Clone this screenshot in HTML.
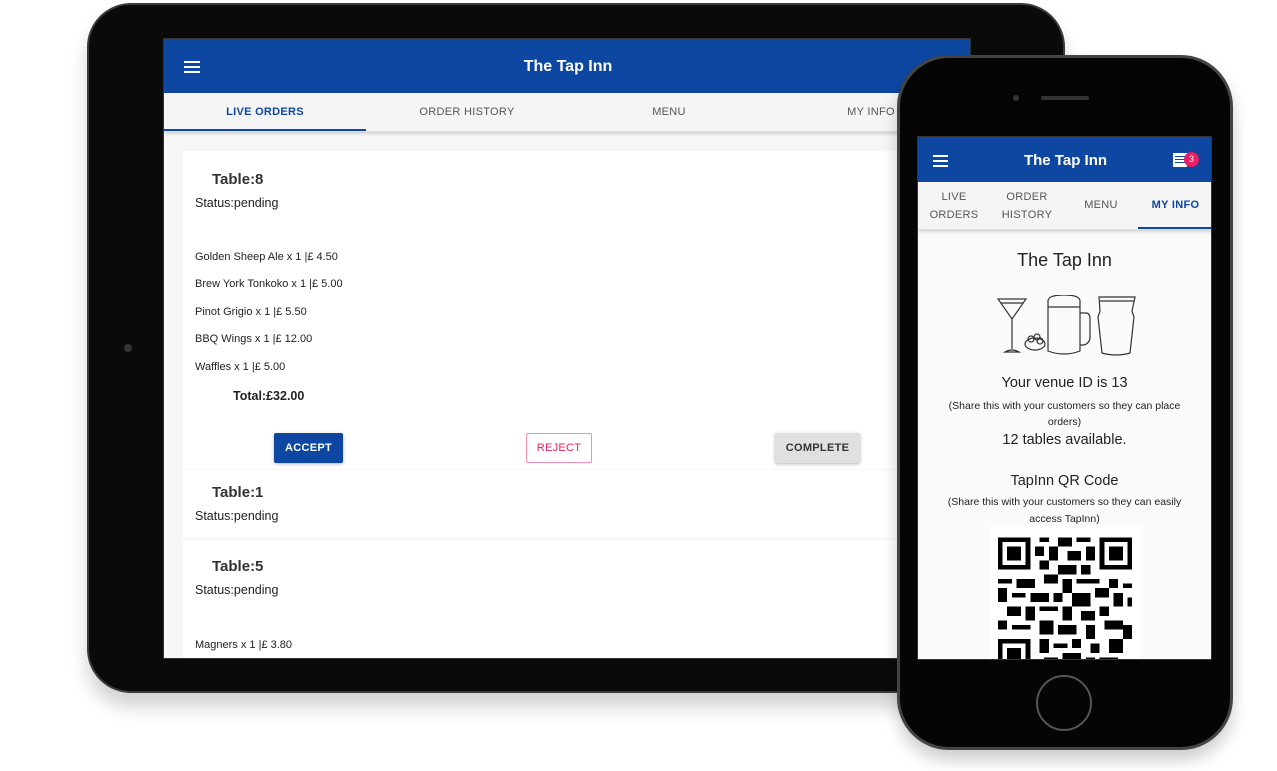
<!DOCTYPE html>
<html><head><meta charset="utf-8"><style>
*{margin:0;padding:0;box-sizing:border-box}
body{width:1277px;height:771px;background:#fff;position:relative;overflow:hidden;font-family:"Liberation Sans",Roboto,sans-serif;color:#222}
.abs{position:absolute}
.tab{left:87px;top:3px;width:978px;height:690px;background:#0a0a0a;border-radius:44px;box-shadow:0 14px 18px rgba(0,0,0,.18);border:2px solid #3a3a3a}
.tscreen{left:163px;top:38px;width:808px;height:621px;background:#f7f7f7;overflow:hidden;border:1px solid #333}
.hdr{background:#0d47a1;color:#fff;font-weight:bold;text-align:center}
.ham{position:absolute;width:16px;height:2px;background:#fff;box-shadow:0 5px 0 #fff,0 -5px 0 #fff}
.tabs{background:#f5f5f5;border-bottom:1px solid #ddd;box-shadow:0 2px 3px rgba(0,0,0,.15)}
.tabs div{position:absolute;font-size:11px;color:#555;text-align:center;letter-spacing:.3px}
.card{background:#fff;position:absolute}
.t{position:absolute;font-size:11px;color:#222}
.btn{position:absolute;font-size:11px;font-weight:bold;text-align:center;border-radius:2px;letter-spacing:.3px}
.phone{left:897px;top:55px;width:336px;height:695px;background:#050505;border-radius:52px;border:3px solid #444;box-shadow:0 10px 16px rgba(0,0,0,.2)}
.pscreen{left:917px;top:136px;width:295px;height:524px;background:#fafafa;overflow:hidden;border:1px solid #333}
.c{position:absolute;left:0;width:100%;text-align:center;color:#222}
</style></head><body>
<div class="abs tab"></div>
<div class="abs" style="left:124px;top:344px;width:8px;height:8px;border-radius:50%;background:#333"></div>
<div class="abs tscreen">
 <div class="abs hdr" style="left:0;top:0;width:808px;height:54px;line-height:56px;font-size:16px">The Tap Inn</div>
 <div class="ham" style="left:20px;top:27px"></div>
 <div class="abs tabs" style="left:0;top:54px;width:808px;height:39px">
  <div style="left:0;width:202px;top:13px;color:#0d47a1;font-weight:bold">LIVE ORDERS</div>
  <div style="left:202px;width:202px;top:13px">ORDER HISTORY</div>
  <div style="left:404px;width:202px;top:13px">MENU</div>
  <div style="left:606px;width:202px;top:13px">MY INFO</div>
  <div style="left:0;top:36px;width:202px;height:2px;background:#0d47a1"></div>
 </div>
 <div class="card" style="left:19px;top:112px;width:760px;height:318px"></div>
 <div class="t" style="left:48px;top:132px;font-size:15px;font-weight:bold;color:#333">Table:8</div>
 <div class="t" style="left:31px;top:157px;font-size:12.5px">Status:pending</div>
 <div class="t" style="left:31px;top:212px">Golden Sheep Ale x 1 |£ 4.50</div>
 <div class="t" style="left:31px;top:239px">Brew York Tonkoko x 1 |£ 5.00</div>
 <div class="t" style="left:31px;top:267px">Pinot Grigio x 1 |£ 5.50</div>
 <div class="t" style="left:31px;top:294px">BBQ Wings x 1 |£ 12.00</div>
 <div class="t" style="left:31px;top:322px">Waffles x 1 |£ 5.00</div>
 <div class="t" style="left:69px;top:350px;font-size:12.5px;font-weight:bold">Total:£32.00</div>
 <div class="btn" style="left:110px;top:394px;width:69px;height:30px;line-height:30px;background:#0d47a1;color:#fff;box-shadow:0 1px 3px rgba(0,0,0,.3)">ACCEPT</div>
 <div class="btn" style="left:362px;top:394px;width:66px;height:30px;line-height:28px;border:1px solid #f48fb1;color:#e91e63;font-weight:normal">REJECT</div>
 <div class="btn" style="left:611px;top:394px;width:85px;height:30px;line-height:30px;background:#e0e0e0;color:#333;box-shadow:0 1px 3px rgba(0,0,0,.3)">COMPLETE</div>
 <div class="card" style="left:19px;top:431px;width:760px;height:68px"></div>
 <div class="t" style="left:48px;top:445px;font-size:15px;font-weight:bold;color:#333">Table:1</div>
 <div class="t" style="left:31px;top:470px;font-size:12.5px">Status:pending</div>
 <div class="card" style="left:19px;top:501px;width:760px;height:130px"></div>
 <div class="t" style="left:48px;top:519px;font-size:15px;font-weight:bold;color:#333">Table:5</div>
 <div class="t" style="left:31px;top:544px;font-size:12.5px">Status:pending</div>
 <div class="t" style="left:31px;top:600px">Magners x 1 |£ 3.80</div>
</div>
<div class="abs phone"></div>
<div class="abs" style="left:1013px;top:95px;width:6px;height:6px;border-radius:50%;background:#333"></div>
<div class="abs" style="left:1041px;top:96px;width:48px;height:4px;border-radius:2px;background:#333"></div>
<div class="abs" style="left:1036px;top:675px;width:56px;height:56px;border-radius:50%;border:2px solid #555"></div>
<div class="abs pscreen">
 <div class="abs hdr" style="left:0;top:0;width:295px;height:45px;line-height:48px;font-size:15px">The Tap Inn</div>
 <div class="ham" style="left:15px;top:23px;width:15px"></div>
 <div class="abs" style="left:255px;top:16px;width:14px;height:14px;background:#fff"></div>
 <div class="abs" style="left:257px;top:19px;width:10px;height:1px;background:#0d47a1;box-shadow:0 3px 0 #0d47a1,0 6px 0 #0d47a1"></div>
 <div class="abs" style="left:266px;top:15px;width:15px;height:15px;border-radius:50%;background:#e91e63;color:#fff;font-size:9px;text-align:center;line-height:15px">3</div>
 <div class="abs tabs" style="left:0;top:45px;width:295px;height:48px">
  <div style="left:0;width:72px;top:6px;line-height:18px">LIVE<br>ORDERS</div>
  <div style="left:72px;width:74px;top:6px;line-height:18px">ORDER<br>HISTORY</div>
  <div style="left:146px;width:74px;top:17px">MENU</div>
  <div style="left:220px;width:75px;top:17px;color:#0d47a1;font-weight:bold">MY INFO</div>
  <div style="left:220px;top:45px;width:75px;height:2px;background:#0d47a1"></div>
 </div>
 <div class="c" style="top:113px;font-size:18px">The Tap Inn</div>
 <svg class="abs" style="left:78px;top:158px" width="140" height="64" viewBox="0 0 140 64" fill="none" stroke="#333" stroke-width="1.2">
  <path d="M2 4h28L16 24zM5 8h22M16 24v30M9 57q7-4 14 0z"/>
  <ellipse cx="39" cy="49" rx="10" ry="6"/><circle cx="35" cy="44" r="3"/><circle cx="41" cy="42" r="3"/><circle cx="44" cy="46" r="3"/>
  <path d="M52 6q0-6 16-6t16 6v50q-16 6-32 0z M52 12h32 M84 18h6q4 0 4 6v18q0 6-6 8h-4"/>
  <path d="M103 2h36l-3 14 2 6-4 36q-14 4-28 0l-4-36 2-6z M104 6h34"/>
 </svg>
 <div class="c" style="top:238px;font-size:14.5px">Your venue ID is 13</div>
 <div class="c" style="top:261px;font-size:10.5px;line-height:16px;padding:0 18px">(Share this with your customers so they can place orders)</div>
 <div class="c" style="top:295px;font-size:14.5px">12 tables available.</div>
 <div class="c" style="top:336px;font-size:14.5px">TapInn QR Code</div>
 <div class="c" style="top:357px;font-size:10.5px;line-height:17px;padding:0 14px">(Share this with your customers so they can easily access TapInn)</div>
 <div class="abs" style="left:71px;top:389px;width:152px;height:140px;background:#fff"></div>
 <svg class="abs" style="left:80px;top:400px" width="134" height="130" viewBox="0 0 29 28" shape-rendering="crispEdges" fill="#000">
  <path d="M0 0h7v7h-7zM1 1v5h5v-5zM2 2h3v3h-3z" fill-rule="evenodd"/>
  <path d="M22 0h7v7h-7zM23 1v5h5v-5zM24 2h3v3h-3z" fill-rule="evenodd"/>
  <path d="M0 22h7v7h-7zM1 23v5h5v-5zM2 24h3v3h-3z" fill-rule="evenodd"/>
  <path d="M9 0h2v1h-2zM13 0h3v2h-3zM17 0h3v1h-3zM8 2h2v2h-2zM11 2h2v3h-2zM15 3h3v2h-3zM19 2h2v3h-2zM9 5h2v2h-2zM13 6h4v2h-4zM18 6h2v2h-2z"/>
  <path d="M0 9h3v1h-3zM4 9h4v2h-4zM10 8h3v2h-3zM14 9h2v3h-2zM17 9h5v1h-5zM24 9h2v2h-2zM27 10h2v1h-2zM0 11h2v3h-2zM3 12h3v1h-3zM7 12h4v2h-4zM12 12h2v2h-2zM16 12h4v3h-4zM21 11h3v2h-3zM25 12h2v3h-2zM28 13h1v2h-1z"/>
  <path d="M2 15h3v2h-3zM6 15h2v3h-2zM9 15h4v1h-4zM14 15h2v3h-2zM18 16h3v2h-3zM22 15h2v2h-2zM0 18h2v2h-2zM3 19h4v1h-4zM9 18h3v3h-3zM13 19h4v2h-4zM19 19h2v3h-2zM23 18h4v2h-4zM27 19h2v3h-2z"/>
  <path d="M9 22h2v3h-2zM12 23h3v1h-3zM16 22h2v2h-2zM20 23h2v2h-2zM24 22h3v3h-3zM10 26h3v2h-3zM14 25h4v2h-4zM19 26h2v2h-2zM22 26h4v2h-4z"/>
 </svg>
</div>
</body></html>
